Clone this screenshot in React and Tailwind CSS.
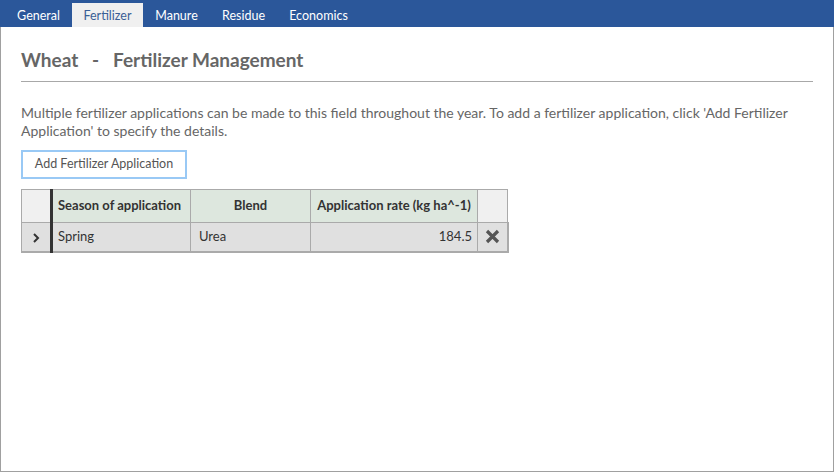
import React from 'react';

const tabs = [
  { label: 'General', w: 'w-[67px]' },
  { label: 'Fertilizer', w: 'w-[71px]' },
  { label: 'Manure', w: 'w-[67px]' },
  { label: 'Residue', w: 'w-[67px]' },
  { label: 'Economics', w: 'w-[83px]' },
];

const rows = [{ season: 'Spring', blend: 'Urea', rate: '184.5' }];

const App = () => {
  return (
    <div className="w-[834px] h-[472px] flex flex-col bg-white font-['Lato','Liberation_Sans',sans-serif]">
      {/* Tab strip */}
      <div className="h-[27px] bg-[#2b579a] flex items-end pl-[5px]">
        {tabs.map((t) => (
          <div
            key={t.label}
            className={`${t.w} h-[24px] pt-[2px] flex items-center justify-center text-[12.5px] ${
              t.label === 'Fertilizer' ? 'bg-[#f0f0f0] text-[#3a5f96]' : 'text-white'
            }`}
          >
            {t.label}
          </div>
        ))}
      </div>

      {/* Content */}
      <div className="flex-1 border border-t-0 border-[#a0a0a0] px-[20px]">
        <h1 className="mt-[21px] pb-[9px] border-b border-[#a8a8a8] text-[19px] leading-[24px] font-bold text-[#666] whitespace-pre">
          {'Wheat   -   Fertilizer Management'}
        </h1>

        <p className="mt-[22px] text-[14px] leading-[18px] text-[#666] pr-[10px]">
          Multiple fertilizer applications can be made to this field throughout the year. To add a fertilizer
          application, click 'Add Fertilizer Application' to specify the details.
        </p>

        <button className="mt-[10px] w-[166px] h-[29px] border-2 border-[#99c9f5] text-[12.5px] text-[#555] bg-white">
          Add Fertilizer Application
        </button>

        <table className="mt-[10px] border-collapse text-[13px] text-[#333]">
          <thead>
            <tr>
              <th className="h-[33px] w-[30px] bg-[#f0f0f0] border border-[#aaa] border-r-[3px] border-r-[#333]" />
              <th className="w-[139px] bg-[#dde7de] border border-[#aaa] text-left px-[5px] font-bold">Season of application</th>
              <th className="w-[120px] bg-[#dde7de] border border-[#aaa] font-bold">Blend</th>
              <th className="w-[167px] bg-[#dde7de] border border-[#aaa] font-bold px-[4px]">Application rate (kg ha^-1)</th>
              <th className="w-[30px] bg-[#f0f0f0] border border-[#aaa]" />
            </tr>
          </thead>
          <tbody>
            {rows.map((r, i) => (
              <tr key={i} className="bg-[#e0e0e0]">
                <td className="h-[29px] p-0 border border-[#aaa] border-r-[3px] border-r-[#333] border-b-2 text-center leading-none">
                  <svg width="10" height="12" viewBox="0 0 10 12" className="inline-block align-middle">
                    <path d="M3 2 L7 6 L3 10" stroke="#333" strokeWidth="2" fill="none" />
                  </svg>
                </td>
                <td className="p-0 border border-[#aaa] border-b-2 px-[5px]">{r.season}</td>
                <td className="p-0 border border-[#aaa] border-b-2 px-[8px]">{r.blend}</td>
                <td className="p-0 border border-[#aaa] border-b-2 px-[5px] text-right">{r.rate}</td>
                <td className="p-0 border border-[#aaa] border-b-2 border-r-2 text-center leading-none">
                  <svg width="15" height="15" viewBox="0 0 15 15" className="inline-block align-middle">
                    <path d="M2 2 L13 13 M13 2 L2 13" stroke="#555" strokeWidth="3.2" />
                  </svg>
                </td>
              </tr>
            ))}
          </tbody>
        </table>
      </div>
    </div>
  );
};

export default App;
